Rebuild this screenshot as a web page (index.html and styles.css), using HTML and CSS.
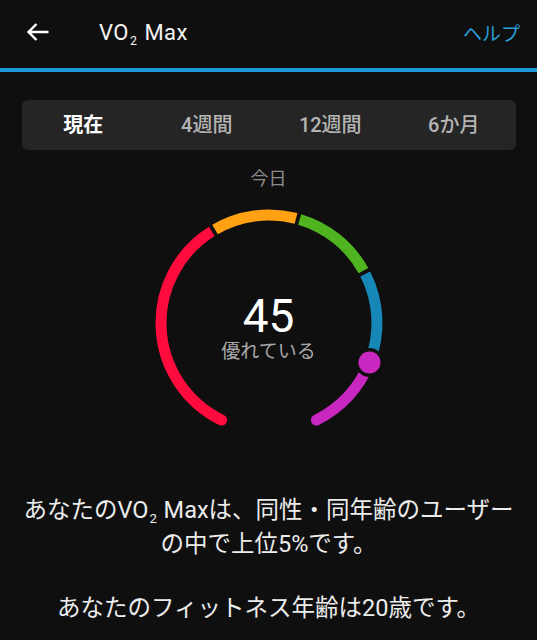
FILE: index.html
```html
<!DOCTYPE html>
<html lang="ja">
<head>
<meta charset="utf-8">
<link rel="stylesheet" href="styles.css">
</head>
<body>
<header class="appbar">
  <svg class="back" width="24" height="20" viewBox="0 0 24 20" aria-hidden="true">
    <path d="M22.5 10H2.5M10.5 2L2.5 10L10.5 18" fill="none" stroke="#ffffff" stroke-width="2.4" stroke-linecap="butt" stroke-linejoin="miter"/>
  </svg>
  <h1 class="title">VO<span class="sub">2</span> Max</h1>
  <a class="help">ヘルプ</a>
</header>

<main class="content">
  <nav class="tabs">
    <div class="tab active">現在</div>
    <div class="tab">4週間</div>
    <div class="tab">12週間</div>
    <div class="tab">6か月</div>
  </nav>

  <div class="day">今日</div>

  <div class="gauge">
    <svg width="240" height="232" viewBox="148.5 203 240 232" aria-hidden="true">
      <g fill="none" stroke-width="11">
        <path d="M221.15 420.07 A108 108 0 0 1 211.27 231.41" stroke="#ff0b3e"/>
        <path d="M214.5 229.47 A108 108 0 0 1 295.54 218.44" stroke="#ffa113"/>
        <path d="M299.17 219.45 A108 108 0 0 1 362.96 270.64" stroke="#4fb420"/>
        <path d="M364.73 273.97 A108 108 0 0 1 368.98 362.58" stroke="#1787b8"/>
        <path d="M368.98 362.58 A108 108 0 0 1 315.85 420.07" stroke="#c928c0"/>
      </g>
      <circle cx="221.15" cy="420.07" r="5.5" fill="#ff0b3e"/>
      <circle cx="315.85" cy="420.07" r="5.5" fill="#c928c0"/>
      <circle cx="368.98" cy="362.58" r="14.5" fill="#0f0f0f"/>
      <circle cx="368.98" cy="362.58" r="11" fill="#c928c0"/>
    </svg>
    <div class="reading">
      <div class="value">45</div>
      <div class="rating">優れている</div>
    </div>
  </div>

  <p class="summary">あなたのVO<span class="sub">2</span> Maxは、同性・同年齢のユーザー<br>の中で上位5%です。</p>
  <p class="summary age">あなたのフィットネス年齢は20歳です。</p>
</main>
</body>
</html>
```

FILE: styles.css
```css
html, body {
  margin: 0;
  padding: 0;
  background: #0f0f0f;
}

body {
  width: 537px;
  min-height: 640px;
  font-family: Roboto, "Noto Sans CJK JP", "Noto Sans", sans-serif;
  color: #f2f2f2;
  overflow: hidden;
}

.appbar {
  height: 64px;
  box-sizing: content-box;
  display: flex;
  align-items: center;
  padding: 0 17px 4px 26px;
  border-bottom: 4px solid #1d9ad7;
}

.back {
  display: block;
  flex: none;
}

.title {
  margin: 0 0 0 49px;
  font-size: 22px;
  font-weight: 400;
  color: #f4f4f4;
  letter-spacing: 0.5px;
  flex: 1;
}

.sub {
  font-size: 0.56em;
  position: relative;
  top: 0.45em;
  margin: 0 1px;
}

.help {
  font-size: 19px;
  color: #2b9fd8;
}

.content {
  display: flex;
  flex-direction: column;
  align-items: center;
}

.tabs {
  margin-top: 28px;
  width: 494px;
  height: 50px;
  display: grid;
  grid-template-columns: repeat(4, 1fr);
  align-items: center;
  background: #252525;
  border-radius: 6px;
}

.tab {
  text-align: center;
  font-size: 20px;
  font-weight: 500;
  color: #b4b4b4;
  line-height: 24px;
}

.tab.active {
  color: #ffffff;
  font-weight: 700;
}

.day {
  margin-top: 17px;
  font-size: 18px;
  line-height: 24px;
  color: #8c8c8c;
}

.gauge {
  position: relative;
  margin-top: 12px;
  width: 240px;
  height: 232px;
}

.gauge svg {
  display: block;
}

.reading {
  position: absolute;
  left: 0;
  right: 0;
  top: 90px;
  display: flex;
  flex-direction: column;
  align-items: center;
}

.value {
  font-size: 46px;
  line-height: 46px;
  color: #ffffff;
}

.rating {
  margin-top: 1px;
  font-size: 19px;
  line-height: 24px;
  color: #a9a9a9;
}

.summary {
  margin: 60px 0 0;
  font-size: 23.5px;
  line-height: 30px;
  text-align: center;
  color: #ececec;
}

.summary .sub {
  top: 0.4em;
}

.summary.age {
  margin-top: 34px;
}
```
